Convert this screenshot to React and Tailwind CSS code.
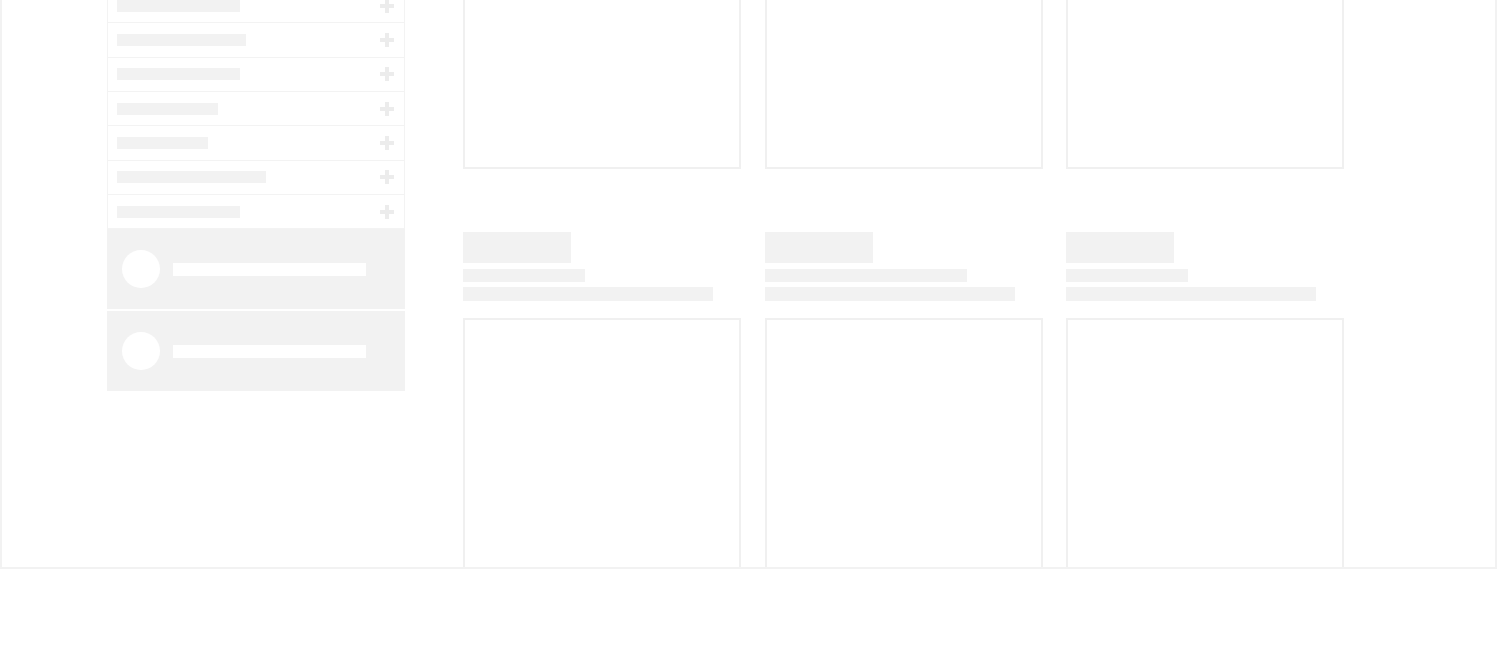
import React from 'react';

const rowBars = [140, 123, 129, 123, 101, 91, 149, 123];

const columns = [
  { title: 108, line1: 122, line2: 250 },
  { title: 108, line1: 202, line2: 250 },
  { title: 108, line1: 122, line2: 250 },
];

const PlusIcon = () => (
  <svg width="14" height="14" viewBox="0 0 14 14" className="shrink-0">
    <rect x="5" y="0" width="4" height="14" fill="#ececec" />
    <rect x="0" y="5" width="14" height="4" fill="#ececec" />
  </svg>
);

const AccordionRow = ({ width }) => (
  <div className="h-[34.33px] box-border border-b border-[#f3f3f3] flex items-center justify-between pl-[9px] pr-[10px]">
    <div className="h-[12px] bg-[#f2f2f2]" style={{ width }} />
    <PlusIcon />
  </div>
);

const ProfileCard = () => (
  <div className="h-[80px] bg-[#f2f2f2] flex items-center pl-[15px] gap-[13px]">
    <div className="w-[38px] h-[38px] rounded-full bg-white" />
    <div className="w-[193px] h-[13px] bg-white" />
  </div>
);

const ColumnHeader = ({ col }) => (
  <div className="flex flex-col">
    <div className="h-[31px] bg-[#f2f2f2]" style={{ width: col.title }} />
    <div className="h-[13px] mt-[6px] bg-[#f2f2f2]" style={{ width: col.line1 }} />
    <div className="h-[14px] mt-[5px] bg-[#f2f2f2]" style={{ width: col.line2 }} />
  </div>
);

const ProductCard = () => (
  <div className="h-[278px] mt-[17px] border-2 border-[#f0f0f0] bg-white" />
);

export default function App() {
  return (
    <div className="w-[1500px] h-[672px] overflow-hidden bg-white">
      {/* skeleton page, scrolled partway down */}
      <div className="-mt-[200px] w-[1497px] h-[769px] box-border border-2 border-[#f2f2f2] overflow-hidden flex pl-[105px]">
        {/* Sidebar */}
        <div className="w-[298px] pt-[152.67px] shrink-0">
          <div className="border-x border-[#f3f3f3]">
            {rowBars.map((w, i) => (
              <AccordionRow key={i} width={w} />
            ))}
          </div>
          <div className="flex flex-col gap-[2px]">
            <ProfileCard />
            <ProfileCard />
          </div>
        </div>

        {/* Products grid */}
        <div className="ml-[58px] pt-[3px] grid grid-cols-[repeat(3,278px)] gap-x-[23.5px] gap-y-[63px] content-start">
          {[0, 1].map(row =>
            columns.map((col, i) => (
              <div key={`${row}-${i}`}>
                <ColumnHeader col={col} />
                <ProductCard />
              </div>
            ))
          )}
        </div>
      </div>
    </div>
  );
}
